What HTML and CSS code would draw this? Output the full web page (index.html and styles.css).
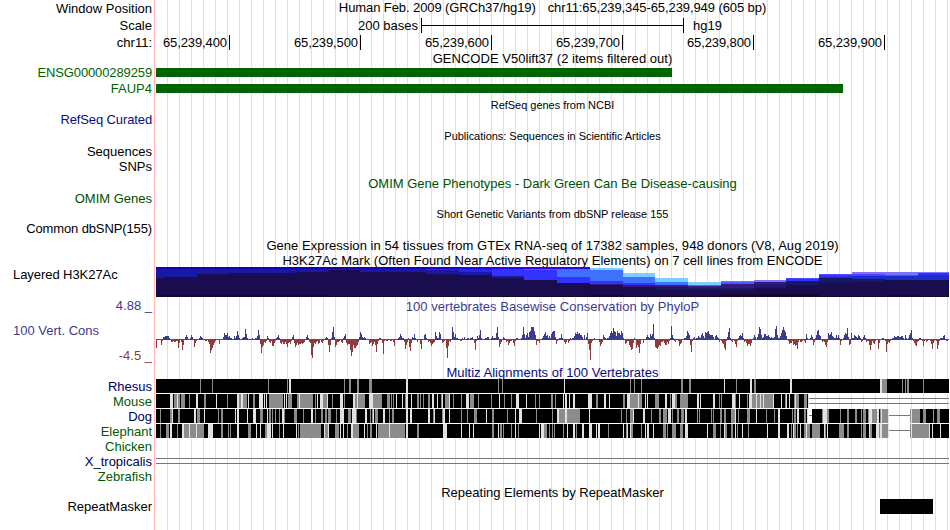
FILE: index.html
```
<!DOCTYPE html>
<html lang="en">
<head>
    <meta charset="UTF-8">
    <title>Human chr11:65,239,345-65,239,949 Genome Browser</title>
    <link rel="stylesheet" href="styles.css">
</head>
<body>

    <div class="browser">
        <div class="row h17"><div class="label">Window Position</div><div class="title position up"><span>Human Feb. 2009 (GRCh37/hg19)</span><span>chr11:65,239,345-65,239,949 (605 bp)</span></div></div>
        <div class="row h17"><div class="label">Scale</div><div class="scale"><span class="bases">200 bases</span><span class="scale-bar"></span><span>hg19</span></div></div>
        <div class="row h17"><div class="label">chr11:</div><div class="ruler"><span>65,239,400</span><span>65,239,500</span><span>65,239,600</span><span>65,239,700</span><span>65,239,800</span><span>65,239,900</span></div></div>

        <!-- Genes -->
        <div class="row h14"><div class="label"></div><div class="title gencode">GENCODE V50lift37 (2 items filtered out)</div></div>
        <div class="row h15"><div class="label green tight">ENSG00000289259</div><div class="gene gene-long"></div></div>
        <div class="row h17"><div class="label green">FAUP4</div><div class="gene gene-faup4"></div></div>
        <div class="row h15"><div class="label"></div><div class="title small down">RefSeq genes from NCBI</div></div>
        <div class="row h15"><div class="label navy tight">RefSeq Curated</div></div>
        <div class="row h17"><div class="label"></div><div class="title small down">Publications: Sequences in Scientific Articles</div></div>
        <div class="row h15"><div class="label up">Sequences</div></div>
        <div class="row h16"><div class="label up">SNPs</div></div>
        <div class="row h16"><div class="label"></div><div class="title omim">OMIM Gene Phenotypes - Dark Green Can Be Disease-causing</div></div>
        <div class="row h15"><div class="label omim up">OMIM Genes</div></div>
        <div class="row h15"><div class="label"></div><div class="title small down">Short Genetic Variants from dbSNP release 155</div></div>
        <div class="row h16"><div class="label tight up">Common dbSNP(155)</div></div>
        <div class="row h16"><div class="label"></div><div class="title gtex">Gene Expression in 54 tissues from GTEx RNA-seq of 17382 samples, 948 donors (V8, Aug 2019)</div></div>
        <div class="row h14"><div class="label"></div><div class="title gencode">H3K27Ac Mark (Often Found Near Active Regulatory Elements) on 7 cell lines from ENCODE</div></div>
        <div class="row h30"><div class="label left">Layered H3K27Ac</div><svg id="h3k27ac" width="793" height="30" viewBox="156 267 793 30" shape-rendering="crispEdges"></svg></div>

        <!-- Conservation -->
        <div class="row cons">
            <div class="label cons-label"><span class="blue">4.88 _</span><span class="blue name">100 Vert. Cons</span><span class="brown">-4.5 _</span></div>
            <div class="cons-track">
                <div class="title blue gencode">100 vertebrates Basewise Conservation by PhyloP</div>
                <svg id="phylop" width="793" height="48" viewBox="156 316 793 48" shape-rendering="crispEdges"></svg>
            </div>
        </div>

        <!-- Multiz -->
        <div class="row h15"><div class="label"></div><div class="title navy gencode multiz">Multiz Alignments of 100 Vertebrates</div></div>
        <div class="row h15"><div class="label dark-navy">Rhesus</div><svg id="rhesus" width="793" height="15" viewBox="156 0 793 15" shape-rendering="crispEdges"></svg></div>
        <div class="row h15"><div class="label dark-green">Mouse</div><svg id="mouse" width="793" height="15" viewBox="156 0 793 15" shape-rendering="crispEdges"></svg></div>
        <div class="row h15"><div class="label dark-navy">Dog</div><svg id="dog" width="793" height="15" viewBox="156 0 793 15" shape-rendering="crispEdges"></svg></div>
        <div class="row h15"><div class="label dark-green">Elephant</div><svg id="elephant" width="793" height="15" viewBox="156 0 793 15" shape-rendering="crispEdges"></svg></div>
        <div class="row h15"><div class="label dark-green">Chicken</div></div>
        <div class="row h15"><div class="label dark-navy">X_tropicalis</div><div class="gap-lines"></div></div>
        <div class="row h15"><div class="label dark-green">Zebrafish</div></div>

        <div class="row h15"><div class="label"></div><div class="title down">Repeating Elements by RepeatMasker</div></div>
        <div class="row h15"><div class="label">RepeatMasker</div><div class="repeat"></div></div>
    </div>

    <script src="tracks.js"></script>
</body>
</html>
```
FILE: styles.css
```
* {
    margin: 0;
    padding: 0;
    box-sizing: border-box;
}
body {
    background: white;
    color: black;
    font-family: "Liberation Sans", Arial, Helvetica, sans-serif;
    font-size: 13px;
    line-height: 15px;
    overflow: hidden;
}
.browser {
    width: 949px;
    height: 530px;
    /* pink left edge, then a guideline every 12px */
    background:
        linear-gradient(#ffb4b4, #ffb4b4) 154px 0 / 1px 100% no-repeat,
        repeating-linear-gradient(90deg, transparent 0 11px, #dcdcf5 11px 12px) 156px 0 / 793px 100% no-repeat;
}
.row {
    display: grid;
    grid-template-columns: 152px 793px;
    column-gap: 4px;
    align-items: center;
    white-space: nowrap;
}
.h14 { height: 14px; }
.h15 { height: 15px; }
.h16 { height: 16px; }
.h17 { height: 17px; }
.h30 { height: 30px; }
svg {
    display: block;
}
.label {
    text-align: right;
}
.label.left {
    align-self: start;
    text-align: left;
    padding-left: 13px;
    letter-spacing: -0.06px;
}
.title {
    text-align: center;
}
.small {
    font-size: 11px;
    letter-spacing: -0.03px;
}
.up { padding-bottom: 2px; }
.down { padding-top: 2px; }
.h15 .up { padding-bottom: 3px; }
.h15 .down { padding-top: 1px; }
.tight { letter-spacing: -0.12px; }
.gencode { letter-spacing: 0.03px; }
.gtex { letter-spacing: 0.055px; }
.position {
    display: flex;
    justify-content: center;
    gap: 12px;
    letter-spacing: -0.09px;
}
.green { color: #006400; }
.omim { color: #005000; }
.navy { color: #0c0c78; }
.dark-navy { color: #00005a; }
.dark-green { color: #005a00; }
.blue { color: #3c3c8c; }
.brown { color: #8c3c3c; }

.scale {
    display: flex;
    align-items: center;
}
.bases {
    width: 262px;
    text-align: right;
}
.scale-bar {
    width: 263px;
    height: 15px;
    margin: 0 9px 0 3px;
    border-left: 1px solid black;
    border-right: 1px solid black;
    background: linear-gradient(black, black) 0 7px / 100% 1px no-repeat;
}
.ruler {
    display: flex;
}
.ruler span {
    width: 131px;
    height: 15px;
    padding-right: 2px;
    border-right: 1px solid black;
    text-align: right;
    letter-spacing: -0.1px;
}
.ruler span:first-child {
    width: 74px;
}
.gene {
    height: 9px;
    background: #006400;
}
.gene-long { width: 516px; }
.gene-faup4 { width: 687px; }

.cons {
    height: 67px;
    align-items: stretch;
}
.cons-label {
    display: flex;
    flex-direction: column;
    justify-content: space-between;
    padding: 1px 0 1px;
}
.cons-label .name {
    text-align: left;
    padding-left: 13px;
}
.cons-track .title {
    height: 19px;
    line-height: 20px;
}
.multiz {
    padding-top: 1px;
}
.gap-lines {
    align-self: start;
    height: 6px;
    margin-top: 4px;
    border-top: 1px solid #787878;
    border-bottom: 1px solid #787878;
}
.repeat {
    width: 53px;
    height: 15px;
    margin-left: 724px;
    background: black;
}
```
FILE: tracks.js
```
const SVG_NS = "http://www.w3.org/2000/svg";

function rect(svg, x, y, w, h, fill) {
    const r = document.createElementNS(SVG_NS, "rect");
    r.setAttribute("x", x);
    r.setAttribute("y", y);
    r.setAttribute("width", w);
    r.setAttribute("height", h);
    r.setAttribute("fill", fill);
    svg.appendChild(r);
}

// H3K27Ac: start x, then [top y, colour] for every layer down to the baseline
const h3k27ac = [
    [156, [267, "#1a00a8"], [269, "#1717a8"], [278, "#190d50"], [295, "#160828"]],
    [164, [267, "#1a00a8"], [269, "#1717a8"], [277, "#190d50"], [295, "#160828"]],
    [197, [267, "#1a00a8"], [269, "#1717a8"], [274, "#190d50"], [295, "#160828"]],
    [229, [267, "#1a00a8"], [269, "#1717a8"], [273, "#190d50"], [295, "#160828"]],
    [295, [267, "#1a00a8"], [269, "#1717a8"], [272, "#190d50"], [295, "#160828"]],
    [328, [267, "#1a00a8"], [269, "#1717a8"], [270, "#190d50"], [296, "#160828"]],
    [360, [267, "#1a00b4"], [269, "#1717a8"], [272, "#190d50"], [296, "#160828"]],
    [426, [267, "#2000d0"], [269, "#1c30c0"], [270, "#1717a8"], [274, "#190d50"], [296, "#160828"]],
    [459, [267, "#2a00f0"], [269, "#1c30d8"], [272, "#1717a8"], [275, "#190d50"], [296, "#160828"]],
    [492, [267, "#3000ff"], [269, "#3333ff"], [276, "#1717a8"], [278, "#190d50"], [296, "#160828"]],
    [524, [267, "#3000ff"], [269, "#4068ff"], [270, "#3333ff"], [280, "#190d50"], [296, "#160828"]],
    [557, [267, "#3000ff"], [269, "#4070ff"], [277, "#3333ff"], [283, "#190d50"], [296, "#160828"]],
    [590, [268, "#7ccfff"], [270, "#4070ff"], [281, "#3333ff"], [284, "#381880"], [285, "#190d50"], [295, "#160828"]],
    [623, [273, "#7ccfff"], [277, "#4070ff"], [283, "#3333ff"], [285, "#381880"], [287, "#190d50"], [296, "#160828"]],
    [655, [278, "#7ccfff"], [282, "#4070ff"], [285, "#381880"], [287, "#181860"], [290, "#190d50"], [296, "#160828"]],
    [688, [282, "#7ccfff"], [285, "#4070ff"], [286, "#381880"], [288, "#181860"], [290, "#190d50"], [296, "#160828"]],
    [721, [281, "#7474ff"], [282, "#3c60ff"], [284, "#381880"], [288, "#181860"], [290, "#190d50"], [294, "#160828"]],
    [754, [280, "#7c74f8"], [282, "#381880"], [284, "#241870"], [287, "#181860"], [288, "#190d50"], [294, "#160828"]],
    [786, [278, "#4c48ff"], [279, "#3333ff"], [281, "#181860"], [285, "#190d50"], [294, "#160828"]],
    [819, [274, "#5848ff"], [275, "#3333ff"], [277, "#1830c8"], [278, "#181860"], [283, "#190d50"], [296, "#160828"]],
    [852, [272, "#7c74ff"], [274, "#6038ff"], [276, "#1830c8"], [279, "#181860"], [282, "#190d50"], [296, "#160828"]],
    [885, [272, "#7c74ff"], [275, "#6040e8"], [276, "#1830c8"], [280, "#190d50"], [295, "#160828"]],
    [918, [272, "#7c74ff"], [273, "#3333ff"], [275, "#1830c8"], [280, "#190d50"], [296, "#160828"]]
];

const hist = document.getElementById("h3k27ac");
h3k27ac.forEach(function (col, i) {
    const end = i + 1 < h3k27ac.length ? h3k27ac[i + 1][0] : 949;
    col.slice(1).forEach(function (layer) {
        rect(hist, col[0], layer[0], end - col[0], 297 - layer[0], layer[1]);
    });
});

// PhyloP: "x:score,score,..." one score per pixel, in pixels above or below zero
const phylop = `156:-8 161:-5,-1,2,2,3,3,3,3,1 171:-2,-2,-1 174:-2,-2,-1,-1,-8,-3,0,-2,-10,-5 185:2,4,2,0,0,1,4,2,0,-7,-3,-1
199:1,3,2,1 205:-1,-1,0,-2,-4,-13,-10,-8,-5,-3,-1 219:-4 223:2,6,4,4,6,2,3,1 230:1,1,0,0,3,1,3,8,4,1 242:1,2,2,10,5,1 252:1,0,0,1,1,3,9,4
260:-4,-13,-7,-5,-2,-3,-1 267:3,1,-2,-3,-1,-6,-6,-3,-1,1,2,4,1,-3,-4,-2,-4,-4,-2,-4,-7,-3,-2,-4,-1,2,4,-3,-7,-5,-3,-5,-4,-4,-3,-4,-3,-2,0,2,4,1,-2,-3,-15,-18,-7,-3,-4,-2,-1,-4,-3,0,-2,-3,-1,0,1,2,1,-5,-12,-5,1,7,12,2
335:-7,-5,-2,-2,-1,0,-2,-3,1,3,5,-3,-5,-4,-4,-10,-16,-12,-5,-8,-8,-6,-5,-2,2,7,5,2,1,2,1 369:-4,-3,-2,-6,-4,-2,-5,-12,-4,-1,1,1,0,-3,-14,-1 386:-1,-1,0,0,-1,-1,0,-2,-6 398:1,2,5,3,1,1,-2,-9,-5,-2,1,-7,-11,-3,2,1,5,1,0,-2
420:-4,-9 424:4,5,1,0,-2,-1,-3,-6,-4,-3,-2,7,3,1,1,7,5,0,-3,-2,-1,0,-8,-18,-6,-1,-2 452:12,7,2,5,1,1 460:-1,-1,1,0,2,0,0,1,1,0,1,1,2,0,-3,-10,-1,3,1,4,9,1 485:1,1,2,2 491:1,3,1,1,1,6,12,2,-7,-4,-2,0,2,1,0,-2,-1,-5,-3,-1,-1,0,-3,-6,-1,1,1 521:1,4,12,5,1,4,6,2,7,8,12,12,12,8,4,-5,-1,-1,-3,0,0,1,3,5,7,3,4,1,3,1,5,7,8,8,2,-4,-1,0,1,1,5,1,0,-2,-4,-2,0,-3,-1,1,0,1,1
574:3,6,5,7,5,6,4,4,2,0,4,0,2,6,-4,-10,-20,-3,-1,0,1,0,0,0,0,-2,-6,-4,-2,4,2,1,0,1,1,3,6,8,6,11,8,7,3,8,6,6,4,8,6,1,0,-4,-3,-1,-1,-5,-7,-10,-9,-3,1,0,-8,-5,-7,-13,-4,0,0,-3,0,0,2,4,2,1,5,3,5,15,1
655:-7,-8,-9,-7,-5,-6,-2,-2,-1,-3,-5,-5,-2,-4,-1,1,13,4,1,-1,-2,0,0,-1,-6,-4,-3,0,0,1,1,3,8,6,4,-5,-12,-1,1,2,0,1,1,3,2,1,4,6,3,1,7,6,7,8,5,4,4,4,2,0,3,4,2,1,-2,0,-1,-3,-4,-8,-10,-1,2,7,11,1
731:-1,-2,0,-1,-4,-7,-1,1,3,4,3,6,1,-2,-1,-3,-6,-4,-4,-6,-3,0,1,4,2,0,2,5,12,10,4,1,2,5,5,3,3,4,2,1,2,1,1,2,10,13,4,1,1,3,6,9,12,9,7,3,0,-1,-4,-3,-3,-1,-5,-4,-6,-5,-9,-2 800:-2,-2,-1,0,-1,-3,5,1,0,0,1,4,2,-5,-2,1,4,8,9,4,3,0,-2,-1,-2,-5,-7,-2,6,4,5,7,3,2,1,1,4,1,4,1,-5,-1,0,1,4,6,5,11,2,-5,-4,6,1,1,4,3,2,1,4,3,1,-2,-1,2,4,1,-2,-1,-1,-5,-10,-5,-1,-3,-4,-1,0,0,-9,-3,0,0,1,1,0,-1,-12,-4,-2,-3,-1,0,1,1,3,2,2,3,3,2,2,3,3,1,0,4,1,0,1,4,6,9,1,-1,-3,-5,-6,-2,-1,1,1,0,-1,-6,-1,0,-2,-1,0,0,-1,-4,-9,-3,-1,0,-1,-9,-5,-1,1,1,1,3,4,0,-1,-1`;

const wiggle = document.getElementById("phylop");
rect(wiggle, 156, 339, 793, 1, "#8c3c3c");
phylop.split(/\s+/).forEach(function (run) {
    const parts = run.split(":");
    parts[1].split(",").map(Number).forEach(function (score, i) {
        const x = Number(parts[0]) + i;
        if (score > 0) rect(wiggle, x, 339 - score, 1, score + 1, "#3c3c8c");
        if (score < 0) rect(wiggle, x, 339, 1, 1 - score, "#8c3c3c");
    });
});

// Multiz: black where the species aligns, with grey (g) and light (w) columns.
// x or x-width for every column
const alignments = {
    rhesus: {
        blocks: [[156, 949]], single: [], double: [],
        g: "200 212 268 287 344 349-2 357-2 369-3 498 502 630 634 641 681-2 689-2 736 754-2 882-5 902 905 907-2 923",
        w: "289-2 406-2 564 724 750-2 790-2 880-2"
    },
    mouse: {
        blocks: [[156, 808]], single: [], double: [[809, 949]],
        g: "174-3 178-2 181-4 189 204-2 227 239-2 243-4 253-2 269-14 288-4 297-2 300-13 315 323-4 332 344 353-6 359-6 373-9 387-3 391 393 405 417-2 420 423 428-2 441 445-4 453 461 470-4 478 491 504 511 535 539 551-2 555 596-2 623-2 630-8 639-3 655-4 670 675-2 680-8 719 721 735 747 752-4 757-3 761-2 764-9 785 794 796-3 804-3",
        w: "170-2 172 177 196-2 216 237-2 241-2 248 259-4 264 266 284 286 299 317 320-3 327 340-3 353-2 357 369-4 396 402 406-2 411 432-2 437 442 449 466-3 499 516-3 526 563 565-2 569 573-2 588-4 604-2 609 627-3 638 645 647 665-2 672-3 697-2 700 713-2 732-3 739 749-3 756 760 763 773 781 786 789 795 808"
    },
    dog: {
        blocks: [[156, 808], [812, 889], [910, 949]], single: [[809, 812], [889, 910]], double: [],
        g: "160 170-2 178-2 197-3 218 221-2 260-3 269-2 272 275 279 284 294-3 303 315 321-2 325-2 328-3 336 348-3 356 370 372 375-3 389 392-2 433 442 461 467 474-3 492-2 507 536 552 559-6 567-13 621 626 630-3 651 659-2 663-4 672 677-2 681-3 697 699 711 713 720-2 724-2 731-4 738 747-3 766 774 792 794-2 804-2 822 827-2 840 847-2 855-2 861 863-3 868 872-5 880 882-6 910 912-8 923-3 933 937-3",
        w: "172 194-2 204 235 237-2 247 253-3 267 282-2 311-2 340-4 352-4 365-2 373 383-2 406-2 410-2 428-2 434 443-2 449 486 515 519-3 557-2 565-2 589 633 643-2 668-3 685-2 735 756 778-2 797-2 807 823-4 869-3 877-2 881 888 911"
    },
    elephant: {
        blocks: [[156, 889], [910, 949]], single: [[889, 910]], double: [],
        g: "160 166-2 168 177 184-5 190-6 197-7 221-2 228 230 248-3 265-2 279 298 300-21 325-3 335-4 347 353-6 367 370-2 378-11 390-15 417-2 492-2 500-2 503 511 518 544-3 549 552 554 563 576 608 626 631-2 641 663-3 667 672-4 680-3 713-3 720 725-2 731-2 737 748 791 794-2 797 804-2 807-3 812-8 825 839-5 847-2 861 863-3 870-2 879 882-6 910 912-17",
        w: "170-2 182-2 189 196 208-5 237-2 256 260 267-4 272 283 296 324 328 340 343 351-2 364 376 389 406-2 443-4 461 469 473 498 515 539 541-3 567 573-2 582-2 589-3 596 598-2 623 627 630 645 647-2 653 685-3 707 724 735 742 767 778-2 787-2 793 800 806 824 827 869 876-3 880-2 888 911 929 932 940"
    }
};

Object.keys(alignments).forEach(function (species) {
    const svg = document.getElementById(species);
    const data = alignments[species];
    // white underlay keeps the guidelines out of the gap between species
    rect(svg, 156, 0, data.double.length || data.single.length ? 652 : 793, 15, "white");
    data.blocks.forEach(b => rect(svg, b[0], 0, b[1] - b[0], 14, "black"));
    data.single.forEach(b => rect(svg, b[0], 6, b[1] - b[0], 1, "#787878"));
    data.double.forEach(function (b) {
        rect(svg, b[0], 4, b[1] - b[0], 1, "#787878");
        rect(svg, b[0], 9, b[1] - b[0], 1, "#787878");
    });
    [["g", "#8c8c8c"], ["w", "#e1e1e1"]].forEach(function (shade) {
        data[shade[0]].split(" ").forEach(function (c) {
            const p = c.split("-");
            rect(svg, Number(p[0]), 0, Number(p[1] || 1), 14, shade[1]);
        });
    });
});
```
